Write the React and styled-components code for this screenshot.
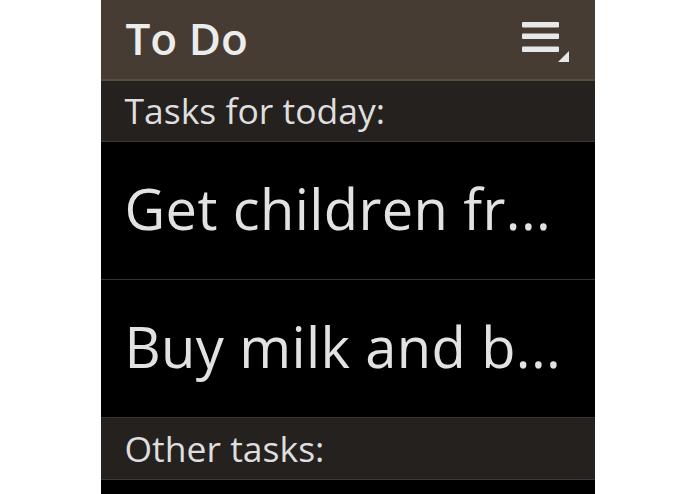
import React from "react";
import styled, { createGlobalStyle } from "styled-components";

const Global = createGlobalStyle`
  html, body { margin: 0; padding: 0; background: #ffffff; }
  body { font-family: "Open Sans", "Noto Sans", sans-serif; }
`;

const Screen = styled.div`
  width: 494px;
  height: 494px;
  margin: 0 auto;
  background: #000;
  overflow: hidden;
  display: flex;
  flex-direction: column;
`;

const Header = styled.header`
  flex: none;
  height: 79px;
  background: #463c33;
  border-bottom: 2px solid #5a4c3e;
  display: flex;
  align-items: center;
  justify-content: space-between;
  padding: 0 26px 0 25px;
`;

const Title = styled.h1`
  margin: 0;
  font-size: 44px;
  font-weight: 600;
  color: #ececec;
  line-height: 1;
  padding-bottom: 4px;
`;

const MenuButton = styled.button`
  border: 0;
  background: none;
  padding: 5px 0 0 0;
  display: flex;
  align-items: center;
  justify-content: center;
`;

const SectionHeader = styled.div`
  flex: none;
  height: ${(p) => (p.$last ? 61 : 60)}px;
  background: #25211e;
  border-bottom: 1px solid #3c3a38;
  display: flex;
  align-items: center;
  padding: 0 24px;
  font-size: 35.5px;
  color: #dedede;
  line-height: 1;
`;

const TaskRow = styled.div`
  flex: none;
  height: 137px;
  border-bottom: 1px solid #343434;
  display: flex;
  align-items: center;
  padding: 0 24px;
`;

const TaskText = styled.div`
  font-size: 56px;
  letter-spacing: 0.4px;
  color: #e2e2e2;
  white-space: nowrap;
  line-height: 1.2;
  padding-bottom: 4px;
`;

function MenuIcon() {
  return (
    <svg width="47" height="40" viewBox="0 0 47 40">
      <rect x="0" y="0" width="37" height="5.5" rx="1" fill="#e8e8e8" />
      <rect x="0" y="11.5" width="37" height="5.5" rx="1" fill="#e8e8e8" />
      <rect x="0" y="24.5" width="37" height="5.5" rx="1" fill="#e8e8e8" />
      <polygon points="47,29 47,40 36,40" fill="#e8e8e8" />
    </svg>
  );
}

export default function App() {
  return (
    <>
      <Global />
      <Screen>
        <Header>
          <Title>To Do</Title>
          <MenuButton aria-label="Menu">
            <MenuIcon />
          </MenuButton>
        </Header>
        <SectionHeader>Tasks for today:</SectionHeader>
        <TaskRow>
          <TaskText>Get children fr...</TaskText>
        </TaskRow>
        <TaskRow>
          <TaskText>Buy milk and b...</TaskText>
        </TaskRow>
        <SectionHeader $last>Other tasks:</SectionHeader>
      </Screen>
    </>
  );
}
